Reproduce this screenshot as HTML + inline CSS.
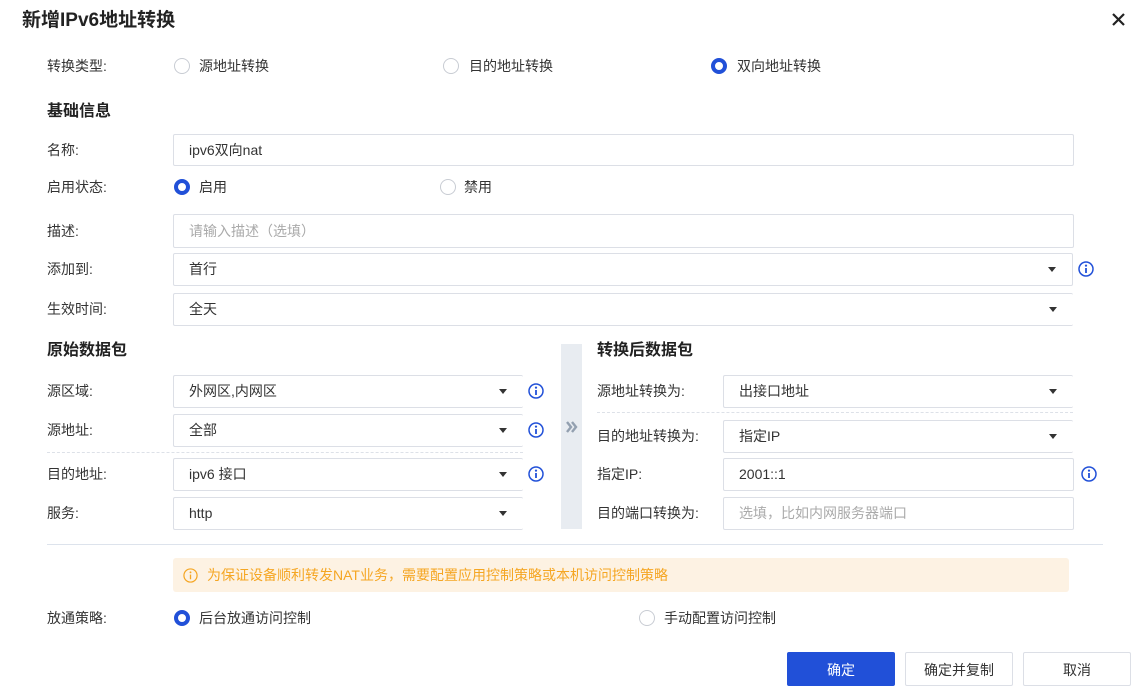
<!DOCTYPE html>
<html><head><meta charset="utf-8"><style>
*{box-sizing:border-box;margin:0;padding:0}
body{width:1148px;height:690px;background:#fff;font-family:"Liberation Sans","Noto Sans CJK SC",sans-serif;color:#333;font-size:14px;position:relative;overflow:hidden}
.a{position:absolute;white-space:nowrap}
.lbl{position:absolute;line-height:20px;color:#333;font-size:14px}
.h{position:absolute;font-weight:bold;font-size:16px;color:#222;line-height:22px}
.box{position:absolute;border:1px solid #dcdfe6;border-radius:2px;line-height:30px;padding-left:15px;font-size:14px;color:#333;background:#fff}
.nr{border-right:none}
.ph{color:#aaa}
.arr{position:absolute;right:16px;top:13px;width:0;height:0;border-left:4px solid transparent;border-right:4px solid transparent;border-top:5px solid #333}
.r{position:absolute;width:16px;height:16px;border-radius:50%;border:1px solid #c8ccd3;background:#fff}
.r.on{border:4.5px solid #2150d8}
.info{position:absolute;width:16px;height:16px}
.dash{position:absolute;border-top:1px dashed #dde1e8;height:0}
.btn{position:absolute;height:34px;line-height:34px;text-align:center;border:1px solid #dcdfe6;border-radius:2px;font-size:14px;color:#333;background:#fff}
</style></head><body>
<div class="a" style="left:22px;top:8px;font-size:19px;font-weight:bold;color:#222;line-height:26px">新增IPv6地址转换</div>
<svg class="a" style="left:1111px;top:12px" width="15" height="15" viewBox="0 0 15 15"><path d="M2 2L13 13M13 2L2 13" stroke="#222" stroke-width="2.2"/></svg>

<div class="lbl" style="left:47px;top:56px">转换类型:</div>
<div class="r" style="left:174px;top:58px"></div><div class="lbl" style="left:199px;top:56px">源地址转换</div>
<div class="r" style="left:443px;top:58px"></div><div class="lbl" style="left:469px;top:56px">目的地址转换</div>
<div class="r on" style="left:711px;top:58px"></div><div class="lbl" style="left:737px;top:56px">双向地址转换</div>

<div class="h" style="left:47px;top:101px">基础信息</div>
<div class="lbl" style="left:47px;top:140px">名称:</div>
<div class="box" style="left:173px;top:134px;width:901px;height:32px">ipv6双向nat</div>
<div class="lbl" style="left:47px;top:177px">启用状态:</div>
<div class="r on" style="left:174px;top:179px"></div><div class="lbl" style="left:199px;top:177px">启用</div>
<div class="r" style="left:440px;top:179px"></div><div class="lbl" style="left:464px;top:177px">禁用</div>
<div class="lbl" style="left:47px;top:221px">描述:</div>
<div class="box ph" style="left:173px;top:214px;width:901px;height:34px;line-height:32px">请输入描述（选填）</div>
<div class="lbl" style="left:47px;top:259px">添加到:</div>
<div class="box" style="left:173px;top:253px;width:900px;height:33px">首行<i class="arr"></i></div>
<svg class="info" style="left:1078px;top:261px" viewBox="0 0 16 16"><circle cx="8" cy="8" r="7" fill="none" stroke="#2150d8" stroke-width="1.5"/><circle cx="8" cy="4.6" r="1.1" fill="#2150d8"/><path d="M8 7v5" stroke="#2150d8" stroke-width="1.8"/></svg>
<div class="lbl" style="left:47px;top:299px">生效时间:</div>
<div class="box nr" style="left:173px;top:293px;width:900px;height:33px">全天<i class="arr"></i></div>

<div class="h" style="left:47px;top:340px">原始数据包</div>
<div class="lbl" style="left:47px;top:381px">源区域:</div>
<div class="box nr" style="left:173px;top:375px;width:350px;height:33px">外网区,内网区<i class="arr"></i></div>
<div class="lbl" style="left:47px;top:420px">源地址:</div>
<div class="box nr" style="left:173px;top:414px;width:350px;height:33px">全部<i class="arr"></i></div>
<div class="dash" style="left:47px;top:452px;width:476px"></div>
<div class="lbl" style="left:47px;top:464px">目的地址:</div>
<div class="box nr" style="left:173px;top:458px;width:350px;height:33px">ipv6 接口<i class="arr"></i></div>
<div class="lbl" style="left:47px;top:503px">服务:</div>
<div class="box nr" style="left:173px;top:497px;width:350px;height:33px">http<i class="arr"></i></div>
<svg class="info" style="left:528px;top:383px" viewBox="0 0 16 16"><circle cx="8" cy="8" r="7" fill="none" stroke="#2150d8" stroke-width="1.5"/><circle cx="8" cy="4.6" r="1.1" fill="#2150d8"/><path d="M8 7v5" stroke="#2150d8" stroke-width="1.8"/></svg>
<svg class="info" style="left:528px;top:422px" viewBox="0 0 16 16"><circle cx="8" cy="8" r="7" fill="none" stroke="#2150d8" stroke-width="1.5"/><circle cx="8" cy="4.6" r="1.1" fill="#2150d8"/><path d="M8 7v5" stroke="#2150d8" stroke-width="1.8"/></svg>
<svg class="info" style="left:528px;top:466px" viewBox="0 0 16 16"><circle cx="8" cy="8" r="7" fill="none" stroke="#2150d8" stroke-width="1.5"/><circle cx="8" cy="4.6" r="1.1" fill="#2150d8"/><path d="M8 7v5" stroke="#2150d8" stroke-width="1.8"/></svg>

<div class="a" style="left:561px;top:344px;width:21px;height:185px;background:#e8ecf1"></div>
<svg class="a" style="left:565px;top:420px" width="14" height="14" viewBox="0 0 14 14"><path d="M2 2L6 7L2 12M7 2L11 7L7 12" fill="none" stroke="#93a0b0" stroke-width="2.4"/></svg>

<div class="h" style="left:597px;top:340px">转换后数据包</div>
<div class="lbl" style="left:597px;top:381px">源地址转换为:</div>
<div class="box nr" style="left:723px;top:375px;width:350px;height:33px">出接口地址<i class="arr"></i></div>
<div class="dash" style="left:597px;top:412px;width:476px"></div>
<div class="lbl" style="left:597px;top:426px">目的地址转换为:</div>
<div class="box nr" style="left:723px;top:420px;width:350px;height:33px">指定IP<i class="arr"></i></div>
<div class="lbl" style="left:597px;top:464px">指定IP:</div>
<div class="box" style="left:723px;top:458px;width:351px;height:33px">2001::1</div>
<svg class="info" style="left:1081px;top:466px" viewBox="0 0 16 16"><circle cx="8" cy="8" r="7" fill="none" stroke="#2150d8" stroke-width="1.5"/><circle cx="8" cy="4.6" r="1.1" fill="#2150d8"/><path d="M8 7v5" stroke="#2150d8" stroke-width="1.8"/></svg>
<div class="lbl" style="left:597px;top:503px">目的端口转换为:</div>
<div class="box ph" style="left:723px;top:497px;width:351px;height:33px">选填，比如内网服务器端口</div>

<div class="a" style="left:47px;top:544px;width:1056px;height:1px;background:#dde3ec"></div>
<div class="a" style="left:173px;top:558px;width:896px;height:34px;background:#fdf2e3;border-radius:3px"></div>
<svg class="a" style="left:183px;top:568px" width="15" height="15" viewBox="0 0 16 16"><circle cx="8" cy="8" r="7" fill="none" stroke="#f5a623" stroke-width="1.3"/><circle cx="8" cy="4.6" r="1" fill="#f5a623"/><path d="M8 7v5" stroke="#f5a623" stroke-width="1.4"/></svg>
<div class="lbl" style="left:207px;top:565px;color:#f5a623">为保证设备顺利转发NAT业务，需要配置应用控制策略或本机访问控制策略</div>

<div class="lbl" style="left:47px;top:608px">放通策略:</div>
<div class="r on" style="left:174px;top:610px"></div><div class="lbl" style="left:199px;top:608px">后台放通访问控制</div>
<div class="r" style="left:639px;top:610px"></div><div class="lbl" style="left:664px;top:608px">手动配置访问控制</div>

<div class="btn" style="left:787px;top:652px;width:108px;background:#2150d8;border-color:#2150d8;color:#fff">确定</div>
<div class="btn" style="left:905px;top:652px;width:108px">确定并复制</div>
<div class="btn" style="left:1023px;top:652px;width:108px">取消</div>
</body></html>
